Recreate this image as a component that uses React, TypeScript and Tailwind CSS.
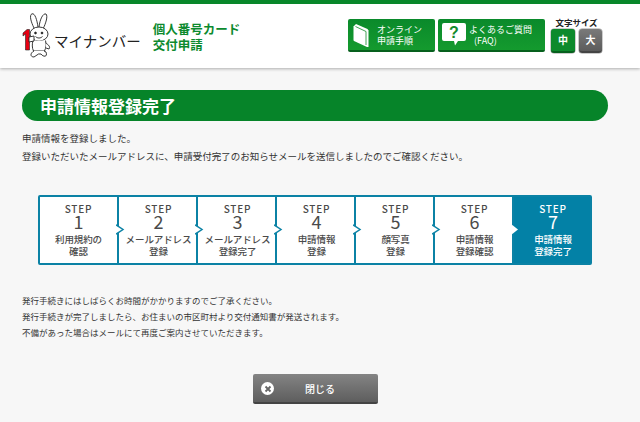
import React from 'react';

const STEPS = [
    { no: 1, lines: ['利用規約の', '確認'] },
    { no: 2, lines: ['メールアドレス', '登録'] },
    { no: 3, lines: ['メールアドレス', '登録完了'] },
    { no: 4, lines: ['申請情報', '登録'] },
    { no: 5, lines: ['顔写真', '登録'] },
    { no: 6, lines: ['申請情報', '登録確認'] },
    { no: 7, lines: ['申請情報', '登録完了'] },
];

const Mascot = () => (
    <svg width="29" height="45" viewBox="0 0 29 45" fill="none" stroke="#222" strokeWidth="0.900" className="shrink-0">
        <path d="M12 15C9 9 7 2 10 0.800C13 0 15 7 16 14" fill="#fff" />
        <path d="M17 14C18 6 21 0 24 1C26 3 24 10 21 16" fill="#fff" />
        <ellipse cx="17" cy="21" rx="9" ry="7" fill="#fff" />
        <circle cx="13.500" cy="20" r="0.900" fill="#222" />
        <circle cx="20" cy="20" r="0.900" fill="#222" />
        <path d="M13.500 23.500C15.500 25.500 18.500 25.500 20.500 23.500" />
        <path d="M11 27.500C10 31 10 35 11.500 38L22.500 38C24 35 24.500 31 23.500 27.500" fill="#fff" />
        <path d="M23.500 30C27 32 28.500 34 27 36L24 35" fill="#fff" />
        <path d="M12 38C8 40 8 44 12 44L16.500 41L19 41C21 44 26 44.500 24 39L22 38" fill="#fff" />
        <path d="M1 20L5 16.500L7.500 16.500L7.500 37L3.500 37L3.500 21L1 23Z" fill="#e60012" stroke="#222" strokeWidth="0.600" />
        <path d="M7 24L12 23L12 28L7 29Z" fill="#fff" />
    </svg>
);

const BookIcon = () => (
    <svg width="16" height="24" viewBox="0 0 16 24" className="shrink-0">
        <path d="M0.500 3.500L3 1L14.500 6L15.500 7.500L15.500 24L14 24L1 18Q0.500 17.500 0.500 17Z" fill="#fff" />
        <path d="M2.500 3.500L13 8.500L13 22" stroke="#128a2b" strokeWidth="0.800" fill="none" />
    </svg>
);

const QuestionIcon = () => (
    <svg width="24" height="23" viewBox="0 0 24 23" className="shrink-0">
        <path d="M2 0H22Q24 0 24 2V16Q24 18 22 18H16L13 22.500L12 18H2Q0 18 0 16V2Q0 0 2 0Z" fill="#fff" />
        <text x="12" y="15" textAnchor="middle" fontSize="16" fontWeight="700" fill="#128a2b" fontFamily="Liberation Sans, sans-serif">?</text>
    </svg>
);

const Chevron = ({ active }: { active: boolean }) => (
    <svg width="9" height="11" viewBox="0 0 9 11" className="absolute left-full top-[27px] z-10 -ml-[1px]">
        {active ? (
            <path d="M0 0L7 5.500L0 11Z" fill="#fff" />
        ) : (
            <>
                <path d="M0 1L7 5.500L0 10Z" fill="#fff" />
                <path d="M0 0.800L7 5.500L0 10.200" fill="none" stroke="#0b82a5" strokeWidth="1.500" />
            </>
        )}
    </svg>
);

export default function App() {
    return (
        <div className="h-[422px] w-[640px] overflow-hidden bg-[#f7f7f7] font-['Noto_Sans_CJK_JP','Noto_Sans',sans-serif] text-[#333]">
            <header className="flex h-[68px] border-t-4 border-[#08872a] bg-white pr-[38px] shadow-[0_1px_3px_rgba(0,0,0,0.3)]">
                <div className="ml-[22px] mt-[9px] flex items-start">
                    <Mascot />
                    <span className="ml-[3px] mt-[17px] whitespace-nowrap text-[14.500px] leading-[22px] text-[#222]">マイナンバー</span>
                </div>
                <div className="ml-[12px] mt-[17px] text-[12.500px] font-bold leading-[16px] text-[#0c8a2e]">
                    <p>個人番号カード</p>
                    <p>交付申請</p>
                </div>
                <div className="ml-auto mt-[15px] flex items-start gap-[3px] text-white">
                    <a className="flex h-[33px] w-[87px] items-center rounded-[2px] border-b-2 border-[#06601d] bg-gradient-to-b from-[#0a8a2b] to-[#149a2e] pl-[5px]">
                        <BookIcon />
                        <span className="ml-[8px] text-[9px] leading-[11px]">オンライン<br />申請手順</span>
                    </a>
                    <a className="flex h-[33px] w-[107px] items-center rounded-[2px] border-b-2 border-[#06601d] bg-gradient-to-b from-[#0a8a2b] to-[#149a2e] pl-[4px]">
                        <QuestionIcon />
                        <span className="ml-[3px] text-[9px] leading-[11px]">よくあるご質問<br /><span className="pl-[5px]">(FAQ)</span></span>
                    </a>
                </div>
                <div className="ml-[6px] mt-[12px] flex w-[51px] flex-col items-center">
                    <span className="whitespace-nowrap text-[8.500px] font-bold leading-[12px] text-[#222]">文字サイズ</span>
                    <div className="mt-[1px] flex gap-[4px] text-[10px] font-bold leading-none text-white">
                        <span className="flex h-[24px] w-[24px] items-center justify-center rounded-[3px] border-b-2 border-[#06601d] bg-[#0d8a2c] shadow-[0_0_0_0.5px_#9a9a9a]">中</span>
                        <span className="flex h-[24px] w-[23px] items-center justify-center rounded-[3px] border-b-2 border-[#444] bg-gradient-to-b from-[#7a7a7a] to-[#5c5c5c] shadow-[0_0_0_0.5px_#9a9a9a]">大</span>
                    </div>
                </div>
            </header>

            <main className="px-[22px] pt-[22px]">
                <h1 className="flex h-[31px] w-[586px] items-center rounded-full bg-[#068429] pl-[18px] text-[17px] font-bold leading-none text-white">申請情報登録完了</h1>
                <div className="mt-[8px] text-[9.500px] leading-[18px] text-[#333]">
                    <p>申請情報を登録しました。</p>
                    <p>登録いただいたメールアドレスに、申請受付完了のお知らせメールを送信しましたのでご確認ください。</p>
                </div>

                <ol className="ml-[16px] mt-[30px] flex h-[70px] w-[554px] rounded-[2px] border-2 border-[#0b82a5] bg-white">
                    {STEPS.map((step, i) => {
                        const current = step.no === 7;
                        return (
                            <li
                                key={step.no}
                                className={`relative flex flex-col items-center pt-[6px] ${current ? 'flex-1 bg-[#0381a6] text-white' : 'w-[79px] border-r-2 border-[#0b82a5] text-[#4a4a4a]'} ${i > 0 ? 'pl-[2px]' : ''}`}
                            >
                                <span className="text-[10px] font-medium leading-[11px] tracking-[0.8px]">STEP</span>
                                <span className="text-[18px] leading-[15px]">{step.no}</span>
                                <span className="mt-[5px] whitespace-nowrap text-center text-[9.500px] font-medium leading-[11.500px] tracking-[-0.1px]">
                                    {step.lines[0]}
                                    <br />
                                    {step.lines[1]}
                                </span>
                                {i < 5 && <Chevron active={false} />}
                                {i === 5 && <Chevron active />}
                            </li>
                        );
                    })}
                </ol>

                <div className="mt-[27px] text-[8.500px] leading-[16px] text-[#333]">
                    <p>発行手続きにはしばらくお時間がかかりますのでご了承ください。</p>
                    <p>発行手続きが完了しましたら、お住まいの市区町村より交付通知書が発送されます。</p>
                    <p>不備があった場合はメールにて再度ご案内させていただきます。</p>
                </div>

                <button className="relative ml-[231px] mt-[34px] flex h-[30px] w-[125px] items-center justify-center rounded-[2px] border-b-2 border-[#444] bg-gradient-to-b from-[#848484] to-[#5e5e5e] pl-[9px] text-[10px] font-medium text-white">
                    <span className="absolute left-[8px] top-[8px] flex h-[13px] w-[13px] items-center justify-center rounded-full bg-white">
                        <svg width="8" height="8" viewBox="0 0 8 8"><path d="M1.500 1.500L6.500 6.500M6.500 1.500L1.500 6.500" stroke="#666" strokeWidth="1.800" /></svg>
                    </span>
                    閉じる
                </button>
            </main>
        </div>
    );
}
